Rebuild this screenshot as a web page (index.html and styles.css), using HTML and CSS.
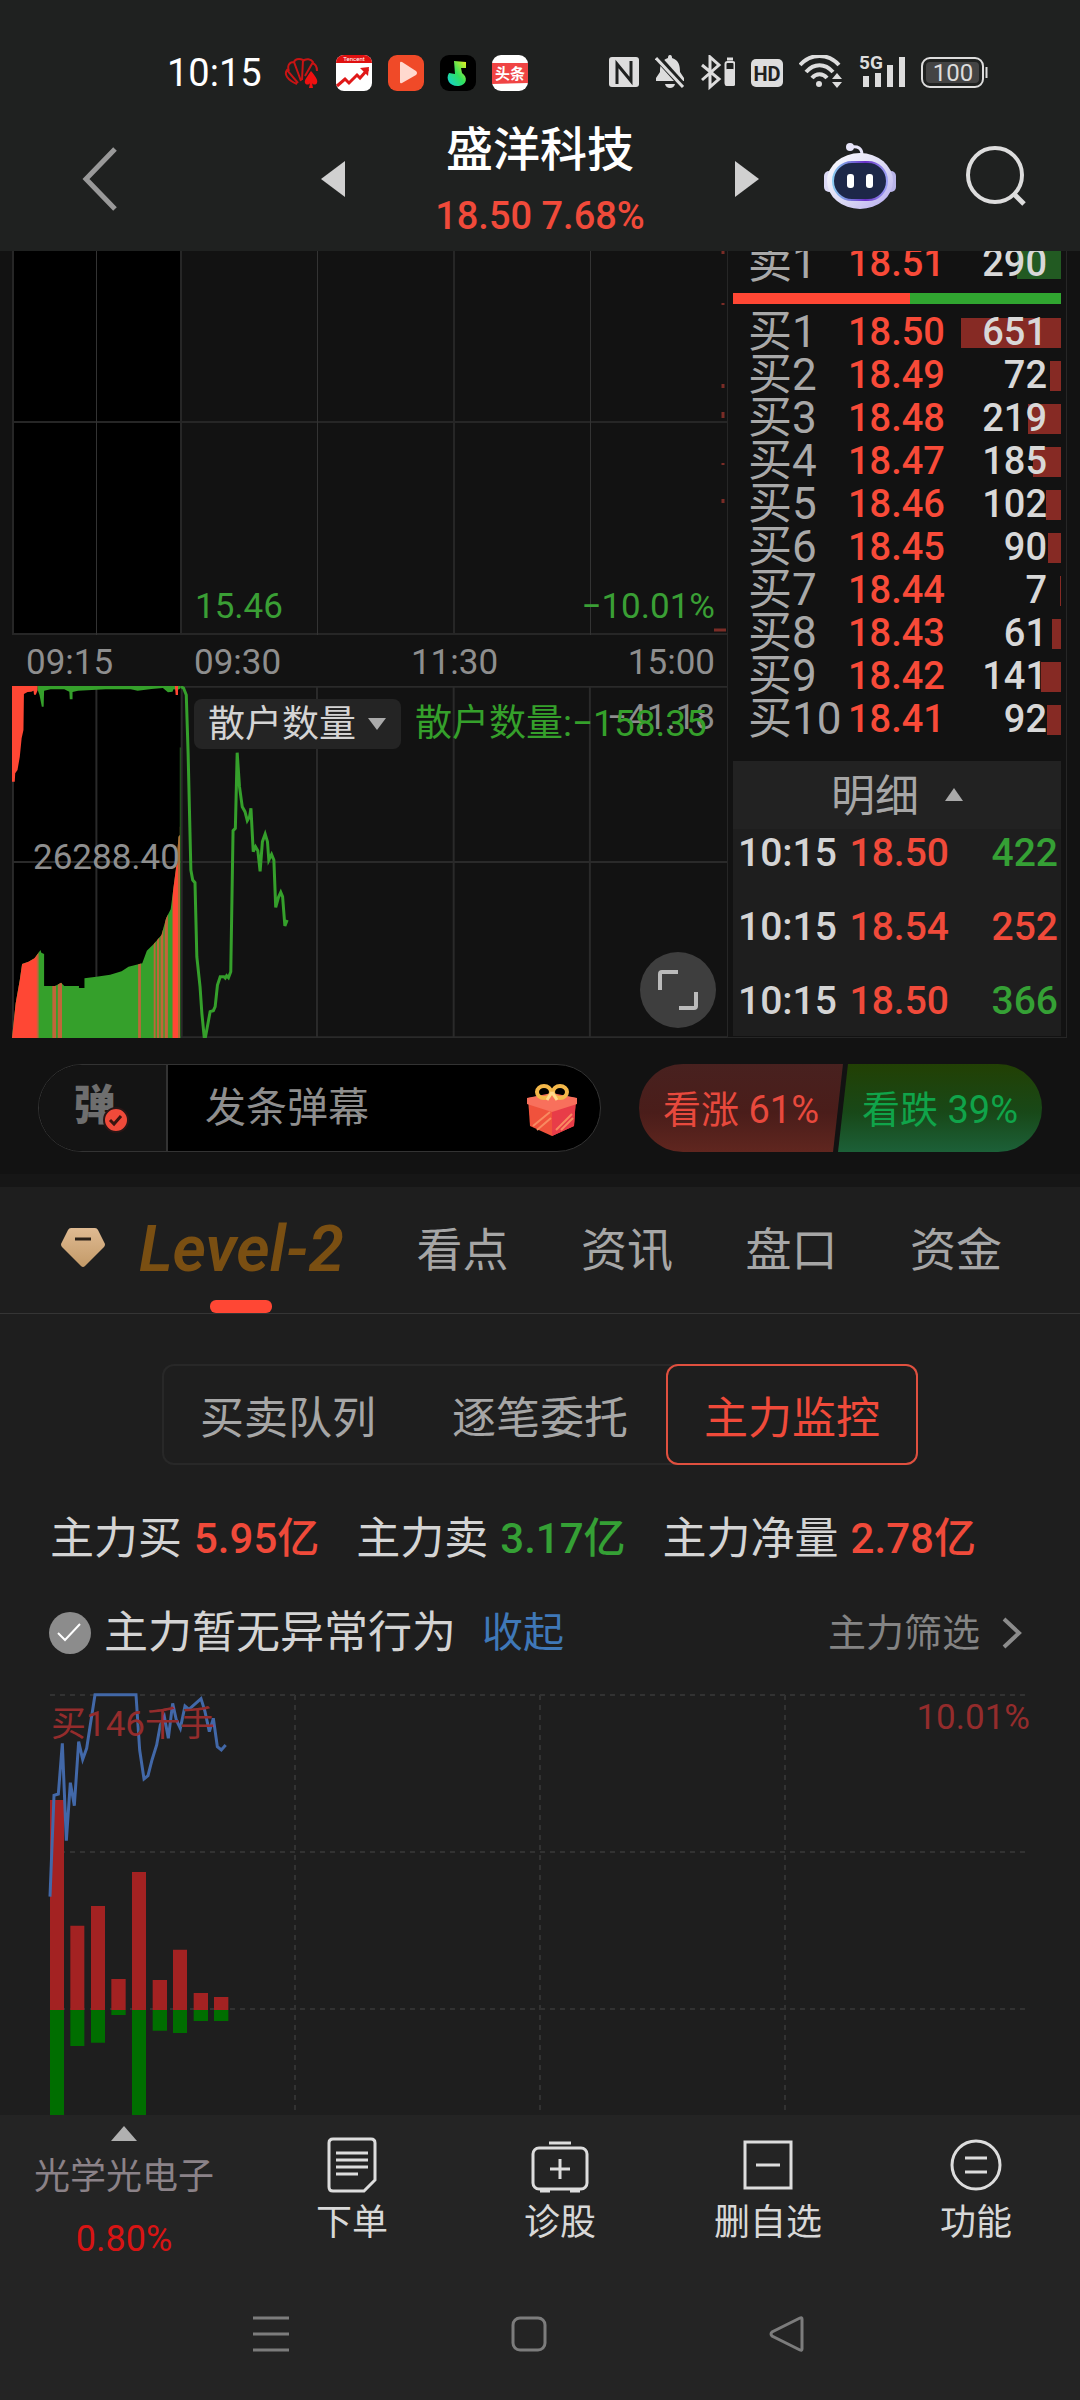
FILE: index.html
```html
<!DOCTYPE html>
<html lang="zh-CN">
<head>
<meta charset="utf-8">
<meta name="viewport" content="width=device-width, initial-scale=1">
<title>盛洋科技</title>
<link rel="stylesheet" href="styles.css">
</head>
<body>
<header class="top">
  <div class="status">
    <time class="clock">10:15</time>
    <div class="status-apps">
      <svg width="36" height="36" viewBox="0 0 36 36" fill="none" stroke="#c81414" stroke-width="2"><path d="M13 29C3 25 0 19 3 15l11 13M5 16C3 11 5 7 10 7l7 19M10 8c0-4 5-5 9-3l-1 20M19 6c3-3 8-2 10 1l-8 14M28 8c4 1 5 5 5 8"/><path fill="#f01010" stroke="none" d="M27 16c5 6 7 9 6 12-1 2-4 2-5 0l1 5h-4l1-5c-1 2-4 2-5 0-1-3 2-6 6-12z"/></svg>
      <svg width="36" height="36" viewBox="0 0 36 36"><rect width="36" height="36" rx="8" fill="#fff"/><path d="M0 8a8 8 0 0 1 8-8h20a8 8 0 0 1 8 8z" fill="#e01010"/><text class="svg-text" x="18" y="6" font-size="6" fill="#fff" text-anchor="middle">Tencent</text><path d="M1 31l8-7 4 4 8-8 3 3 8-9" fill="none" stroke="#e01818" stroke-width="3"/><path d="M24 13l9-1-1 9z" fill="#e01818"/></svg>
      <svg width="36" height="36" viewBox="0 0 36 36"><rect width="36" height="36" rx="9" fill="#f04a28"/><path d="M12 8q0-2 2-1l14 9q2 2 0 4l-14 8q-2 1-2-1z" fill="#ffd9cf"/></svg>
      <svg width="36" height="36" viewBox="0 0 36 36"><defs><linearGradient id="note" x1="1" y1="0" x2="0" y2="1"><stop offset="0" stop-color="#e8f020"/><stop offset=".5" stop-color="#30e060"/><stop offset="1" stop-color="#10d0e0"/></linearGradient></defs><rect width="36" height="36" rx="9" fill="#000"/><path d="M14 6l12 1v6h-5l1 5c6 4 5 12-3 13-9 1-14-7-10-13l6 1z" fill="url(#note)"/></svg>
      <svg width="36" height="36" viewBox="0 0 36 36"><rect width="36" height="36" rx="9" fill="#fff"/><path d="M0 8h36v20L0 29z" fill="#f04444"/><text class="svg-text" x="18" y="24" font-size="15" font-weight="700" fill="#fff" text-anchor="middle">头条</text></svg>
    </div>
    <div class="status-sys">
      <svg width="30" height="36" viewBox="0 0 30 36"><rect y="2" width="30" height="30" rx="3" fill="#ddd"/><path d="M8 29V9l14 17V6" fill="none" stroke="#1f2120" stroke-width="3"/></svg>
      <svg width="30" height="36" viewBox="0 0 30 36"><path d="M15 0c2 0 2 2 2 3 7 2 8 8 8 14l4 6v3H1v-3l4-6c0-6 1-12 8-14 0-1 0-3 2-3z" fill="#ddd"/><path d="M10 29h10q-1 4-5 4t-5-4z" fill="#ddd"/><path d="M1 1l28 31" stroke="#1f2120" stroke-width="7"/><path d="M1 3l27 29" stroke="#ddd" stroke-width="3"/></svg>
      <svg width="34" height="36" viewBox="0 0 34 36"><path d="M1 10l17 14-9 8V2l9 8L1 25" fill="none" stroke="#ddd" stroke-width="3"/><rect x="24.500" y="7" width="9" height="23" rx="2" fill="none" stroke="#ddd" stroke-width="2"/><rect x="24" y="14" width="10" height="17" rx="2" fill="#ddd"/><path d="M26 4h6" stroke="#ddd" stroke-width="3"/></svg>
      <svg width="32" height="36" viewBox="0 0 32 36"><rect y="4" width="32" height="28" rx="5" fill="#ddd"/><text class="svg-text" x="16" y="26" font-size="20" font-weight="700" fill="#1f2120" text-anchor="middle">HD</text></svg>
      <svg width="44" height="36" viewBox="0 0 44 36"><g fill="none" stroke="#ddd" stroke-width="4"><path d="M1 10C12-2 29-2 40 10M7 17c8-9 19-9 27 0M13 23c4-5 11-5 15 0"/></g><circle cx="20" cy="29" r="3" fill="#ddd"/><path d="M38 18l5 6H33zM38 33l-5-6h10z" fill="#ddd"/></svg>
      <svg width="46" height="36" viewBox="0 0 46 36"><text class="svg-text" x="0" y="14" font-size="19" font-weight="700" fill="#ddd">5G</text><path d="M4 21h6v11H4zM16 18h6v14h-6zM28 10h6v22h-6zM40 2h6v30h-6z" fill="#ddd"/></svg>
      <svg width="67" height="36" viewBox="0 0 67 36"><rect x="1" y="3" width="61" height="29" rx="8" fill="none" stroke="#ddd" stroke-width="2"/><rect x="5" y="7" width="53" height="21" rx="4" fill="#444"/><path d="M65.500 12v11" stroke="#ddd" stroke-width="2"/><text class="svg-text" x="32" y="26" font-size="24" fill="#ddd" text-anchor="middle">100</text></svg>
    </div>
  </div>
  <div class="titlebar">
    <button class="icon-btn back" aria-label="返回"><svg width="36" height="64" viewBox="0 0 36 64" fill="none" stroke="#999" stroke-width="5"><path d="M33 2L4 32l29 30"/></svg></button>
    <div class="switcher">
      <button class="icon-btn" aria-label="上一只"><svg width="24" height="36" viewBox="0 0 24 36"><path d="M24 0v36L0 18z" fill="#d0d0d0"/></svg></button>
      <div class="stock"><h1>盛洋科技</h1><p>18.50 7.68%</p></div>
      <button class="icon-btn" aria-label="下一只"><svg width="24" height="36" viewBox="0 0 24 36"><path d="M0 0v36l24-18z" fill="#d0d0d0"/></svg></button>
    </div>
    <div class="tools">
      <button class="icon-btn" aria-label="智能助手"><svg width="72" height="66" viewBox="0 0 72 66"><defs><linearGradient id="shell" x1="0" y1="0" x2="1" y2="1"><stop offset="0" stop-color="#fff"/><stop offset=".6" stop-color="#d8d6f4"/><stop offset="1" stop-color="#b4a8ee"/></linearGradient><linearGradient id="rim" x1="0" y1="0" x2="1" y2="0"><stop offset="0" stop-color="#88c8f0"/><stop offset=".6" stop-color="#6a30c8"/><stop offset="1" stop-color="#9aa0f4"/></linearGradient></defs><circle cx="26" cy="4" r="4" fill="#e8e6fa"/><path d="M27 4c7-1 11 1 11 8" fill="none" stroke="#e8e6fa" stroke-width="3"/><rect y="28" width="10" height="21" rx="5" fill="#dcdaf6"/><rect x="62" y="28" width="10" height="21" rx="5" fill="#b9b4e8"/><ellipse cx="36" cy="38" rx="33" ry="28" fill="url(#shell)"/><rect x="9" y="19" width="54" height="38" rx="19" fill="#1d2748" stroke="url(#rim)" stroke-width="2"/><rect x="23" y="31" width="7" height="14" rx="3" fill="#fff"/><rect x="42" y="31" width="7" height="14" rx="3" fill="#fff"/></svg></button>
      <button class="icon-btn" aria-label="搜索"><svg width="60" height="60" viewBox="0 0 60 60" fill="none" stroke="#ddd" stroke-width="4"><circle cx="29" cy="29" r="27"/><path d="M47 47l11 11" stroke-width="5"/></svg></button>
    </div>
  </div>
</header>

<main>
<section class="market">
  <div class="charts">
    <div class="minute">
      <svg class="fill" viewBox="0 0 715 384" preserveAspectRatio="none"><path d="M1 0h168v384H1z" fill="#000"/><g stroke="#262626" stroke-width="2"><path d="M1 0v384M169 0v384M442 0v384M0 171h715M0 383h715"/></g><g stroke="#333" stroke-width="1"><path d="M84.500 0v384M305.500 0v384M578.500 0v384"/></g><path d="M702 379h12M711 0v3M711 52v2M711 133v4M711 161v6M711 212v2M711 248v4" stroke="#7a2c26" stroke-width="3"/></svg>
      <span class="low">15.46</span><span class="low-pct">−10.01%</span>
    </div>
    <div class="times"><span>09:15</span><span>09:30</span><span>11:30</span><span>15:00</span></div>
    <div class="sub">
      <svg class="fill" viewBox="26 78 1559 1056" preserveAspectRatio="none">
        <path d="M26 78h368v1056H26z" fill="#000"/>
        <path fill="none" stroke="#2a2a2a" stroke-width="2" vector-effect="non-scaling-stroke" d="M28 78v1056M396 78v1056M989 78v1056M26 80h1559M26 1132h1559M26 606h1559M210 78v1056M691 78v1056M1286 78v1056"/>
        <path fill="#ff4734" d="M26 78h56v12l-4 14h-4l-1-12-5 3-8 1-8 6-1 108-4 25-4 55-5 40-5 10-1 25h-6z"/>
        <path fill="#35a02b" d="M82 78h312l-2 8-4 3-10-1-2 7-10 2-11-13-25 3-30 5-15-4h-55l-60 4-12 4v22h-6l-1-23-11-7H110l-14 4-1 48h-4l-5-35-4-15z"/>
        <path fill="#ff4734" d="M381 78h7v27h-5z"/>
        <clipPath id="area"><path d="M26 1134l8-104 9-70 5-48 14-7 13-10 7-13 6-12 2 8 6 4v96h24l13-10 7 10h32v6h12v-29l26-5 30-6 25-10 15-14 30-10 10-38 15-20 17-27 10-50 10-27 6-64 6-64 5-90 3-5V262h2v872z"/></clipPath>
        <g clip-path="url(#area)"><path fill="#35a02b" d="M26 200h368v934H26z"/><path fill="#ff4734" d="M26 860h56v274H26zM376 300h13v834h-13z"/><path fill="#c0663a" d="M80 860h4v274h-4zM114 900h8v234h-8zM126 900h9v234h-9zM301 880h6v254h-6zM335 800h4v334h-4zM342 780h5v354h-5zM350 760h6v374h-6zM359 700h7v434h-7zM389 500h3v634h-3z"/></g>
        <polyline vector-effect="non-scaling-stroke" fill="none" stroke="#35a02b" stroke-width="3" points="394,80 400,84 406,105 410,280 416,630 420,660 425,668 429,890 436,980 440,1060 445,1130 448,1130 458,1055 465,1052 469,1040 474,975 480,950 488,950 491,954 494,947 498,953 503,935 508,512 513,505 517,278 522,380 528,440 534,455 539,482 544,470 547,445 552,575 557,560 562,572 567,634 572,545 578,522 583,545 586,600 592,583 597,600 601,742 607,712 612,697 616,710 621,798 626,780"/>
      </svg>
      <span class="amount">26288.40</span><span class="scale-max">−41.18</span>
      <div class="indicator">
        <label class="picker"><select aria-label="指标"><option>散户数量</option></select><svg width="18" height="12" viewBox="0 0 18 12"><path d="M0 0h18L9 12z" fill="#aaa"/></svg></label>
        <output>散户数量:−158.35</output>
      </div>
      <button class="expand" aria-label="全屏"><svg width="40" height="40" viewBox="0 0 40 40" fill="none" stroke="#bbb" stroke-width="4"><path d="M2 20V4q0-2 2-2h16M38 22v14q0 2-2 2H21"/></svg></button>
    </div>
  </div>
  <aside class="book">
    <table class="quotes sells"><tr><th>卖1</th><td>18.51</td><td><i class="depth" style="width:44px"></i><b>290</b></td></tr></table>
    <div class="ratio"><i></i><i></i></div>
    <table class="quotes buys">
      <tr><th>买1</th><td>18.50</td><td><i class="depth" style="width:100px"></i><b>651</b></td></tr>
      <tr><th>买2</th><td>18.49</td><td><i class="depth" style="width:11px"></i><b>72</b></td></tr>
      <tr><th>买3</th><td>18.48</td><td><i class="depth" style="width:33px"></i><b>219</b></td></tr>
      <tr><th>买4</th><td>18.47</td><td><i class="depth" style="width:28px"></i><b>185</b></td></tr>
      <tr><th>买5</th><td>18.46</td><td><i class="depth" style="width:15px"></i><b>102</b></td></tr>
      <tr><th>买6</th><td>18.45</td><td><i class="depth" style="width:13px"></i><b>90</b></td></tr>
      <tr><th>买7</th><td>18.44</td><td><i class="depth" style="width:1px"></i><b>7</b></td></tr>
      <tr><th>买8</th><td>18.43</td><td><i class="depth" style="width:9px"></i><b>61</b></td></tr>
      <tr><th>买9</th><td>18.42</td><td><i class="depth" style="width:20px"></i><b>141</b></td></tr>
      <tr><th>买10</th><td>18.41</td><td><i class="depth" style="width:14px"></i><b>92</b></td></tr>
    </table>
    <div class="detail">
      <button class="detail-head">明细<svg width="18" height="13" viewBox="0 0 18 13"><path d="M9 0l9 13H0z" fill="#aaa"/></svg></button>
      <table class="ticks">
        <tr><td>10:15</td><td class="up">18.50</td><td class="down">422</td></tr>
        <tr><td>10:15</td><td class="up">18.54</td><td class="up">252</td></tr>
        <tr><td>10:15</td><td class="up">18.50</td><td class="down">366</td></tr>
      </table>
    </div>
  </aside>
</section>

<section class="chatbar">
  <div class="chat">
    <button class="chat-toggle" aria-label="弹幕开关"><span>弹</span><svg width="26" height="26" viewBox="0 0 26 26"><circle cx="13" cy="13" r="12" fill="#f04a3a" stroke="#2a1616" stroke-width="2"/><path d="M7 13l4 4 7-8" fill="none" stroke="#3a1410" stroke-width="3"/></svg></button>
    <input class="chat-input" type="text" placeholder="发条弹幕" aria-label="发条弹幕">
    <button class="gift" aria-label="礼物"><svg width="50" height="52" viewBox="0 0 50 52"><path d="M1 14l24-4 24 4-2 28-22 10L3 42z" fill="#f0523c"/><path d="M25 26v26l22-10 2-28z" fill="#e83c48"/><path d="M0 14l25-5 25 5v6l-25 8L0 20z" fill="#f8705c"/><path d="M6 42l17-14M10 46l14-12M29 46l16-16M34 46l12-12" stroke="#f88a60" stroke-width="2"/><g fill="none" stroke="#f4b84a" stroke-width="4"><ellipse cx="17" cy="8" rx="7" ry="6"/><ellipse cx="33" cy="8" rx="7" ry="6"/></g><path d="M25 8l-5 8M25 8l5 8" stroke="#ffd98a" stroke-width="3"/></svg></button>
  </div>
  <div class="vote">
    <button class="vote-up">看涨 61%</button>
    <button class="vote-down">看跌 39%</button>
  </div>
</section>

<section class="panel">
  <nav class="tabs">
    <button class="tab level"><svg width="44" height="40" viewBox="0 0 44 40"><defs><linearGradient id="gem" x1="0" y1="0" x2="0" y2="1"><stop offset="0" stop-color="#dfba92"/><stop offset="1" stop-color="#c39a68"/></linearGradient></defs><path d="M10 0h24q2 0 3 2l7 14q0 2-1 3L24 38q-2 2-4 0L1 19q-1-1-1-3L7 2q1-2 3-2z" fill="url(#gem)"/><path d="M14 11h16" stroke="#2a2018" stroke-width="3"/></svg><span>Level-2</span></button>
    <button class="tab">看点</button><button class="tab">资讯</button><button class="tab">盘口</button><button class="tab">资金</button>
  </nav>
  <div class="segments">
    <button>买卖队列</button><button>逐笔委托</button><button class="active">主力监控</button>
  </div>
  <dl class="stats">
    <div><dt>主力买</dt><dd class="up">5.95亿</dd></div>
    <div><dt>主力卖</dt><dd class="down">3.17亿</dd></div>
    <div><dt>主力净量</dt><dd class="up">2.78亿</dd></div>
  </dl>
  <div class="notice">
    <svg width="42" height="42" viewBox="0 0 42 42"><circle cx="21" cy="21" r="21" fill="#8c8c8c"/><path d="M9 21l7 7 15-16" fill="none" stroke="#fff" stroke-width="2"/></svg>
    <span>主力暂无异常行为</span>
    <a href="#flow">收起</a>
    <button class="filter">主力筛选<svg width="20" height="32" viewBox="0 0 20 32" fill="none" stroke="#8c8c8c" stroke-width="4"><path d="M2 2l15 14L2 30"/></svg></button>
  </div>
  <div class="flow" id="flow">
    <svg viewBox="150 105 2925 1260" preserveAspectRatio="none">
      <g stroke="#323232" stroke-width="6" stroke-dasharray="15 15"><path d="M150 105h2925M150 576h2925M150 1047h2925M885 105v1260M1620 105v1260M2355 105v1260"/></g>
      <path fill="#a32222" d="M150 420h42v630h-42zM211 797h42v253h-42zM273 738h42v312h-42zM334 957h43v93h-43zM396 636h42v414h-42zM458 960h43v90h-43zM519 869h42v181h-42zM581 999h43v51h-43zM642 1011h43v39h-43z"/>
      <path fill="#006e00" d="M150 1050h42v315h-42zM211 1050h42v108h-42zM273 1050h42v98h-42zM334 1050h43v15h-43zM396 1050h42v315h-42zM458 1050h43v62h-43zM519 1050h42v69h-42zM581 1050h43v33h-43zM642 1050h43v33h-43z"/>
      <polyline fill="none" stroke="#4268a8" stroke-width="9" points="150,710 162,406 175,402 187,250 199,542 211,368 223,437 236,245 248,298 260,265 285,104 408,104 419,270 432,357 444,347 456,300 470,255 481,195 493,170 505,235 518,130 529,180 541,205 555,138 567,148 603,116 615,155 628,215 640,175 652,260 664,270 677,255"/>
    </svg>
    <span class="flow-max">买146千手</span><span class="flow-pct">10.01%</span>
  </div>
</section>
</main>

<footer class="bottom">
  <nav class="actions">
    <button class="sector"><svg width="26" height="15" viewBox="0 0 26 15"><path d="M13 0l13 15H0z" fill="#b0b0b0"/></svg><span>光学光电子</span><b>0.80%</b></button>
    <button><svg width="58" height="56" viewBox="0 0 58 56" fill="none" stroke="#ddd" stroke-width="3"><path d="M10 2h38q4 0 4 4v37l-11 11H10q-4 0-4-4V6q0-4 4-4zM13 16h32M13 23h32M13 30h32M13 37h22"/></svg>下单</button>
    <button><svg width="58" height="56" viewBox="0 0 58 56" fill="none" stroke="#ddd" stroke-width="3"><rect x="2" y="11" width="54" height="41" rx="6"/><path d="M18 6h22M29 22v20M19 32h20M9 54h10M39 54h10"/></svg>诊股</button>
    <button><svg width="58" height="56" viewBox="0 0 58 56" fill="none" stroke="#ddd" stroke-width="3"><path d="M6 5h46v46H6zM17 28h24"/></svg>删自选</button>
    <button><svg width="58" height="56" viewBox="0 0 58 56" fill="none" stroke="#ddd" stroke-width="3"><circle cx="29" cy="28" r="24"/><path d="M18 21h22M18 35h22"/></svg>功能</button>
  </nav>
  <nav class="system">
    <button aria-label="菜单"><svg width="36" height="36" viewBox="0 0 36 36" stroke="#7c7c7c" stroke-width="3"><path d="M0 2h36M0 18h36M0 34h36"/></svg></button>
    <button aria-label="主页"><svg width="36" height="36" viewBox="0 0 36 36" fill="none" stroke="#7c7c7c" stroke-width="3"><rect x="2" y="2" width="32" height="32" rx="7"/></svg></button>
    <button aria-label="后退"><svg width="36" height="36" viewBox="0 0 36 36" fill="none" stroke="#7c7c7c" stroke-width="3"><path d="M33 3v30q0 2-2 1L3 20q-2-2 0-4L31 2q2-1 2 1z"/></svg></button>
  </nav>
</footer>
</body>
</html>
```
FILE: styles.css
```css
* { box-sizing: border-box; }

body {
  margin: 0;
  min-height: 100vh;
  display: flex;
  flex-direction: column;
  background: #121212;
  color: #d4d4d4;
  font-family: Roboto, "Noto Sans CJK SC", sans-serif;
  font-size: 38px;
}

button, input, select {
  margin: 0;
  padding: 0;
  border: 0;
  background: none;
  color: inherit;
  font: inherit;
}

svg { display: block; flex: none; }
h1, p, dl, dd { margin: 0; }
table { border-collapse: collapse; table-layout: fixed; width: 100%; }
th, td { padding: 0; font-weight: 400; text-align: left; white-space: nowrap; }
.up { color: #f04a3a; }
.down { color: #35a035; }
.svg-text { font-family: Roboto, "Noto Sans CJK SC", sans-serif; }

/* header */
.top { background: #1f2120; }
.status {
  display: flex;
  align-items: center;
  height: 95px;
  padding: 51px 92px 0 167px;
}
.clock { font-size: 38px; line-height: 44px; color: #fff; }
.status-apps { display: flex; gap: 16px; margin-left: 22px; }
.status-sys { display: flex; gap: 16px; margin-left: auto; }
.titlebar {
  display: grid;
  grid-template-columns: 1fr 438px 1fr;
  align-items: center;
  height: 156px;
  padding: 0 54px;
}
.icon-btn { display: block; flex: none; }
.back { padding: 12px 0 0 28px; }
.switcher { display: flex; align-items: center; justify-content: space-between; }
.switcher .icon-btn { padding-top: 12px; }
.stock { padding-top: 20px; text-align: center; line-height: 66px; }
.stock h1 { font-size: 47px; font-weight: 500; color: #fff; line-height: 66px; }
.stock p { font-weight: 500; color: #f04a3a; }
.tools { display: flex; align-items: center; justify-content: flex-end; gap: 70px; padding-top: 6px; }

/* intraday charts and order book */
.market { display: flex; padding: 0 13px 0 12px; }
.charts { flex: 1; min-width: 0; font-size: 35px; }
.fill { position: absolute; inset: 0; width: 100%; height: 100%; }
.minute, .sub { position: relative; }
.minute {
  height: 384px;
  display: flex;
  align-items: flex-end;
  justify-content: space-between;
  padding: 0 12px 8px 183px;
  color: #3a9f35;
}
.minute span { position: relative; line-height: 40px; }
.times {
  display: grid;
  grid-template-columns: 168px 1fr 1fr 1fr;
  align-items: center;
  height: 51px;
  padding: 4px 12px 0 14px;
  color: #8e8e8e;
}
.times span:nth-child(3) { text-align: center; }
.times span:nth-child(4) { text-align: right; }
.sub { height: 352px; }
.amount, .scale-max { position: absolute; color: #8e8e8e; line-height: 40px; }
.amount { left: 21px; top: 152px; }
.scale-max { right: 12px; top: 12px; }
.indicator { position: relative; display: flex; align-items: center; gap: 14px; padding: 13px 0 0 182px; }
.indicator output { font-size: 37px; line-height: 50px; color: #35a02b; white-space: nowrap; }
.picker { position: relative; flex: none; width: 207px; color: #d4d4d4; font-size: 37px; }
.picker select {
  display: block;
  width: 100%;
  height: 50px;
  padding-left: 14px;
  border-radius: 8px;
  background: #242424;
  appearance: none;
}
.picker svg { position: absolute; right: 15px; top: 19px; pointer-events: none; }
.expand {
  position: absolute;
  right: 11px;
  bottom: 10px;
  width: 76px;
  height: 76px;
  display: grid;
  place-items: center;
  border-radius: 50%;
  background: #3e3e3e;
}

.book {
  width: 340px;
  flex: none;
  overflow: hidden;
  padding: 0 5px;
  border: solid #262626;
  border-width: 0 1px 1px;
}
.quotes th, .quotes td { height: 43px; line-height: 43px; }
.quotes th { width: 115px; padding-left: 15px; font-size: 44px; color: #a8a8a8; }
.quotes td { width: 101px; color: #f84a38; font-weight: 500; }
.quotes td:last-child { position: relative; width: auto; padding-right: 14px; text-align: right; color: #d8d8d8; }
.quotes b { position: relative; font-weight: 500; }
.depth { position: absolute; right: 0; top: 7px; height: 30px; background: #862a24; }
.sells { margin-top: -9px; }
.sells .depth { background: #225a22; }
.ratio { display: flex; height: 11px; margin: 8px 0 7px; }
.ratio i { flex: 46; background: #30a530; }
.ratio i:first-child { flex: 54; background: #ff4734; }
.detail { margin-top: 20px; background: #1e1e1e; }
.detail-head {
  display: flex;
  align-items: center;
  justify-content: center;
  gap: 26px;
  width: 100%;
  height: 68px;
  padding: 4px 0 0;
  background: #222;
  color: #a6a6a6;
  font-size: 44px;
  line-height: 62px;
}
.detail-head svg { margin-bottom: 6px; }
.ticks { margin-top: 2px; font-size: 39px; }
.ticks td { height: 74px; padding: 0 0 30px 5px; line-height: 44px; font-weight: 500; }
.ticks tr:last-child td { height: 57px; padding-bottom: 13px; }
.ticks td:last-child { width: 105px; padding-right: 3px; text-align: right; }

/* live comments */
.chatbar {
  display: flex;
  align-items: center;
  justify-content: space-between;
  gap: 38px;
  padding: 26px 38px 22px;
}
.chat {
  flex: 1;
  display: flex;
  height: 88px;
  overflow: hidden;
  border: 1px solid #333;
  border-radius: 44px;
  background: #000;
}
.chat-toggle {
  position: relative;
  width: 129px;
  border-right: 2px solid #333;
  background: #141414;
  color: #6e6e6e;
  font-size: 42px;
  font-weight: 900;
}
.chat-toggle span { display: block; padding: 0 16px 14px 0; }
.chat-toggle svg { position: absolute; left: 64px; top: 42px; }
.chat-input { flex: 1; min-width: 0; padding-left: 37px; font-size: 41px; }
.chat-input::placeholder { color: #8e8e8e; opacity: 1; }
.gift { padding: 4px 23px 0 0; }
.vote { display: flex; width: 403px; height: 88px; }
.vote button { flex: 1; padding-bottom: 4px; font-size: 38px; white-space: nowrap; }
.vote-up {
  margin-right: -5px;
  border-radius: 44px 0 0 44px;
  background: linear-gradient(#48211f, #4a1d1a 55%, #60261f);
  color: #e8493d;
  clip-path: polygon(0 0, 100% 0, calc(100% - 10px) 100%, 0 100%);
}
.vote-down {
  border-radius: 0 44px 44px 0;
  background: linear-gradient(#224004, #184818 55%, #1c6038);
  color: #10a44a;
  clip-path: polygon(10px 0, 100% 0, 100% 100%, 0 100%);
}

/* capital monitor */
.panel { border-top: 13px solid #161616; background: #1e1e1e; }
.tabs {
  display: flex;
  align-items: center;
  height: 127px;
  border-bottom: 1px solid #353535;
  padding: 0 78px 0 61px;
  justify-content: space-between;
}
.tab { font-size: 46px; color: #a6a6a6; line-height: 126px; white-space: nowrap; }
.level { position: relative; display: flex; align-items: center; gap: 34px; color: #7a4f12; font-size: 64px; font-style: italic; font-weight: 600; }
.level svg { margin-bottom: 4px; }
.level::after {
  content: "";
  position: absolute;
  left: 149px;
  bottom: 0;
  width: 62px;
  height: 13px;
  border-radius: 6px;
  background: #ff4734;
}
.segments {
  display: flex;
  width: 756px;
  height: 101px;
  margin: 50px auto 0;
  border-radius: 12px;
  box-shadow: inset 0 0 0 2px #282828;
}
.segments button { flex: 1; font-size: 44px; color: #a6a6a6; }
.segments .active { border-radius: 12px; box-shadow: inset 0 0 0 2px #e0503f; color: #f04a3a; }
.stats { display: flex; gap: 37px; padding: 42px 50px 0; }
.stats div { display: flex; gap: 12px; align-items: center; line-height: 64px; }
.stats dt { font-size: 44px; }
.stats dd { font-size: 42px; font-weight: 500; }
.notice { display: flex; align-items: center; padding: 30px 58px 0 49px; height: 94px; line-height: 64px; }
.notice span { margin-left: 13px; font-size: 44px; }
.notice a { margin-left: 26px; font-size: 41px; color: #3f78b8; text-decoration: none; }
.filter { display: flex; align-items: center; gap: 22px; margin-left: auto; color: #848484; }
.flow { position: relative; height: 420px; margin: 30px 55px 0 50px; color: #942c2c; }
.flow > svg { width: 100%; height: 100%; overflow: visible; }
.flow-max, .flow-pct { position: absolute; line-height: 40px; }
.flow-max { left: 1px; top: 10px; font-size: 35px; }
.flow-pct { right: -5px; top: 3px; font-size: 35px; }

/* bottom bars */
.bottom { flex: 1; background: #242424; font-size: 36px; }
.actions { display: flex; height: 150px; }
.actions button {
  flex: 208;
  display: flex;
  flex-direction: column;
  align-items: center;
  gap: 4px;
  padding-top: 22px;
  color: #d8d8d8;
  line-height: 52px;
}
.actions .sector { flex: 248; gap: 10px; padding-top: 11px; color: #8b8288; }
.sector b { color: #d81414; font-weight: 400; }
.system { display: flex; justify-content: center; gap: 222px; padding: 51px 22px 48px 0; }
```
